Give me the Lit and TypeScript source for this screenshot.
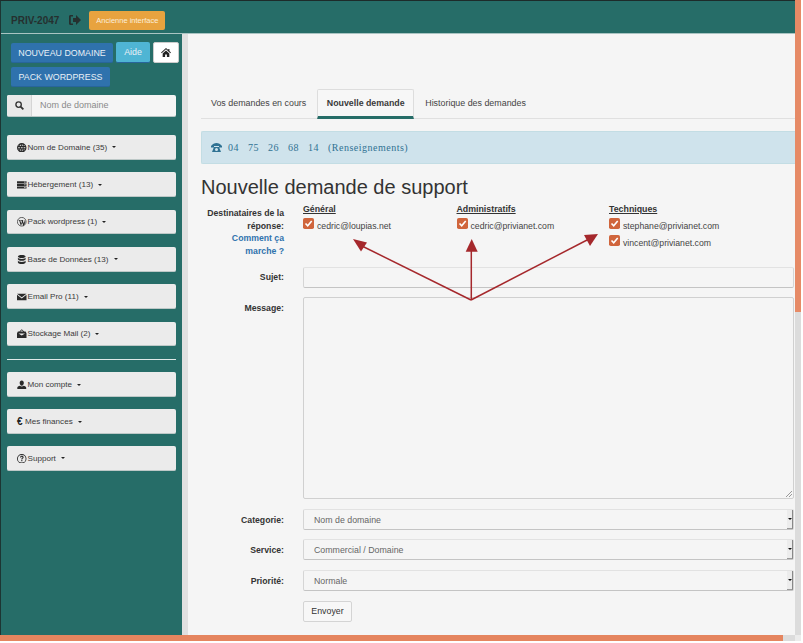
import { LitElement, html, css, svg } from "lit";
import { customElement } from "lit/decorators.js";

const icon = (body: unknown, w = 9.5, vb = "0 0 16 16") =>
  html`<svg class="ic" width=${w} height=${w} viewBox=${vb} fill="currentColor">${body}</svg>`;

const icons: Record<string, unknown> = {
  globe: icon(svg`<path fill-rule="evenodd" d="M8 0a8 8 0 1 0 0 16A8 8 0 0 0 8 0zM7 2v3H5c.3-1.400 1-2.500 2-3zm2 0c1 .5 1.700 1.600 2 3H9zM3.500 3.500 4 5H2.500zm9 0L13.500 5H12zM2 7h2.800v2H2zm4.500 0h3v2h-3zm4.700 0H14v2h-2.800zM2.500 11H4l-.5 1.500zM5 11h2v3c-1-.5-1.700-1.600-2-3zm4 0h2c-.3 1.400-1 2.500-2 3zm3 0h1.500l-1 1.500z"/>`),
  server: icon(svg`<path fill-rule="evenodd" d="M0 2h16v3.500H0zm0 4.500h16V10H0zM0 11h16v3.500H0zM12 3v1.300h2.500V3zm0 4.700V9h2.500V7.700zm0 4.500v1.300h2.500v-1.300z"/>`),
  wp: icon(svg`<circle cx="8" cy="8" r="7.300" fill="none" stroke="currentColor" stroke-width="1.200"/><path d="M2.800 5h3.600v.7l-1 .2 1.800 5.200 1-2.900-.7-2.300-.8-.2V5h3.900v.7l-.9.2 1.800 5.200 1-3.100c.3-1 .1-1.700-.3-2.300H13.600c.6 1.200.6 2.400.2 3.600l-2.300 5.700h-.7L8.700 9.600 7 14.500h-.7L3.700 5.900l-.9-.2z"/>`),
  db: icon(svg`<path d="M8 0C4 0 1.500 1 1.500 2.500S4 5 8 5s6.500-1 6.500-2.500S12 0 8 0zM1.500 4.300v3C1.500 8.800 4 9.800 8 9.800s6.500-1 6.500-2.500v-3C14.500 5.800 12 6.600 8 6.600s-6.500-.8-6.500-2.300zm0 5v3.200C1.500 14 4 15 8 15s6.500-1 6.500-2.500V9.300c0 1.500-2.500 2.300-6.500 2.300s-6.500-.8-6.500-2.300z"/>`),
  mail: icon(svg`<path d="M0 3h16L8 9zm0 1.800V14h16V4.800L8 11z"/>`),
  box: icon(svg`<path fill-rule="evenodd" d="M8 .5 12 4h2.500l1.500 3v8H0V7l1.500-3H4zM5.500 4h5L8 2zM2.500 7.500 8 11l5.500-3.500z"/>`),
  user: icon(svg`<path d="M8 1c2.200 0 3.500 1.600 3.500 4S10 9.500 8 9.500 4.500 7.400 4.500 5 5.800 1 8 1zM5 9.500c.8.800 1.800 1.300 3 1.300s2.200-.5 3-1.300c2.500.6 4.500 1.700 4.500 3.500v2H.5v-2c0-1.800 2-2.900 4.500-3.500z"/>`),
  help: icon(svg`<path fill-rule="evenodd" d="M8 0a8 8 0 1 0 0 16A8 8 0 0 0 8 0zm0 1.500a6.500 6.500 0 1 1 0 13 6.500 6.500 0 0 1 0-13zM5 6c0-2 1.500-3 3.200-3C10 3 11.200 4 11.200 5.500c0 2-2.200 2-2.200 3.700H7.200c0-2.500 2.100-2.500 2.100-3.700 0-.5-.4-.9-1.100-.9-.8 0-1.300.5-1.300 1.400zm2.200 4.200H9V12H7.200z"/>`),
};

const check = html`<svg class="cb" width="11" height="11" viewBox="0 0 11 11"><rect width="11" height="11" rx="1.800" fill="#d0653c"/><path d="M2.500 5.500 4.700 7.800 8.700 3" fill="none" stroke="#fff" stroke-width="1.600"/></svg>`;

const menu1: [string, string][] = [
  ["globe", "Nom de Domaine (35)"],
  ["server", "Hébergement (13)"],
  ["wp", "Pack wordpress (1)"],
  ["db", "Base de Données (13)"],
  ["mail", "Email Pro (11)"],
  ["box", "Stockage Mail (2)"],
];
const menu2: [string, string][] = [
  ["user", "Mon compte"],
  ["euro", "Mes finances"],
  ["help", "Support"],
];

@customElement("app-root")
export class AppRoot extends LitElement {
  static styles = css`
    :host {
      display: grid;
      grid-template-columns: 795px 6px 2px;
      grid-template-rows: 635px 6px 2px;
      width: 803px;
      height: 643px;
      overflow: hidden;
      font-family: "Liberation Sans", Arial, sans-serif;
      font-size: 10px;
      color: #333;
      background: #fff;
    }
    * { box-sizing: border-box; }
    .ic { display: block; flex: none; }
    .page { grid-column: 1; grid-row: 1; display: flex; flex-direction: column; min-width: 0; background: #266d68; border-top: 1px solid #1d2b2a; border-left: 1px solid #1d3533; }
    .top { height: 33px; flex: none; display: flex; align-items: center; padding: 6px 0 0 10px; border-bottom: 1px solid #a9c4c2; }
    .brand { font-size: 10px; font-weight: bold; color: #25302f; }
    .logout { margin-left: 10px; color: #25302f; }
    .old { margin-left: 8px; height: 19px; width: 76px; border-radius: 2px; background: #e8a33f; color: #fbeeda; font-size: 7.500px; display: flex; align-items: center; justify-content: center; }
    .body { flex: 1; display: flex; min-height: 0; }
    .side { width: 181px; flex: none; padding: 8px 0 0 6px; display: flex; flex-direction: column; }
    .acts { display: flex; flex-wrap: wrap; gap: 4px 3px; padding-left: 4px; align-items: flex-start; width: 173px; }
    .b { height: 20px; border-radius: 2px; display: flex; align-items: center; justify-content: center; color: #e9f0f6; font-size: 8.850px; background: #2f72ad; border-bottom: 1px solid #28659b; }
    .b.new { width: 102px; margin-top: 1px; }
    .b.help { width: 34px; height: 21px; background: #4fb5d4; }
    .b.home { width: 26px; height: 21px; background: #fff; color: #222; border: 1px solid #ccc; }
    .b.pack { width: 99px; }
    .search { margin-top: 8px; width: 169px; height: 22px; display: flex; border-radius: 2px; background: #f5f5f5; border-bottom: 1px solid #b9c6c5; }
    .search .ad { width: 25px; background: #e9e9e9; border-right: 1px solid #d5d5d5; display: flex; align-items: center; justify-content: center; color: #333; border-radius: 2px 0 0 2px; }
    .search .ph { padding-left: 8px; color: #8a8a8a; font-size: 9px; line-height: 21px; }
    .menu { display: flex; flex-direction: column; gap: 12.670px; width: 169px; }
    .menu.m1 { margin-top: 18px; }
    .menu.m2 { gap: 12.300px; }
    .item { height: 24.670px; background: #ebebeb; border-radius: 2px; border-bottom: 1px solid #bdc8c7; display: flex; align-items: center; padding: 1px 0 0 10px; font-size: 8.100px; color: #3a3a3a; gap: 1px; }
    .item .ic { color: #2a2a2a; }
    .euro { font-weight: bold; color: #222; font-size: 10px; width: 7px; }
    .caret { width: 0; height: 0; border-left: 2.500px solid transparent; border-right: 2.500px solid transparent; border-top: 2.500px solid #222; margin-left: 4px; }
    .sep { height: 1px; background: #dfe9e8; width: 169px; margin: 12.500px 0; }
    .strip { width: 6px; background: #e0e0e0; flex: none; }
    .content { flex: 1; min-width: 0; background: #f5f5f5; padding: 55px 0 0 13px; }
    .tabs { display: flex; height: 30px; border-bottom: 1px solid #e0e0e0; color: #444; font-size: 8.900px; align-items: stretch; }
    .tab { display: flex; align-items: center; padding: 0 10px 2px; }
    .tab.on { margin: 0 1px; font-weight: bold; font-size: 8.800px; color: #3a3a3a; border: 1px solid #ddd; border-bottom: 3px solid #266d68; border-radius: 2px 2px 0 0; background: #f7f7f7; height: 30px; width: 97px; justify-content: center; padding: 0; }
    .alert { margin-top: 12px; height: 33px; background: #cfe3ec; border: 1px solid #c3dde4; border-right: none; border-radius: 2px 0 0 2px; display: flex; align-items: center; padding-left: 9px; color: #2f7293; font-family: "Liberation Serif", serif; font-size: 10px; letter-spacing: .5px; word-spacing: 6px; gap: 6px; }
    h1 { margin: 12px 0 0; font-size: 20px; font-weight: normal; line-height: 23px; color: #333; }
    .form { margin-top: 8px; display: grid; grid-template-columns: 83px 491px; column-gap: 19px; align-items: start; position: relative; }
    .lab { text-align: right; font-weight: bold; font-size: 8.700px; color: #333; line-height: 12.700px; }
    .lab a { color: #2f72ad; display: block; }
    .lab.mid { line-height: 21px; }
    .lab.low { height: 21px; padding-top: 1px; }
    .dest { height: 45px; margin-top: -4px; display: grid; grid-template-columns: 153.500px 152.500px 1fr; }
    .dest h4 { margin: 0 0 4px; font-size: 8.800px; font-weight: bold; line-height: 12px; text-decoration: underline; color: #333; }
    .cbrow { display: flex; gap: 3px; height: 17px; align-items: flex-start; font-size: 8.700px; color: #444; line-height: 14px; }
    .cb { flex: none; margin-top: -1px; }
    .mt9 { margin-top: 9px; }
    .mt10 { margin-top: 10px; }
    .mt95 { margin-top: 9.500px; }
    .field { height: 21px; border: 1px solid #d5d5d5; border-top-color: #e2e2e2; border-bottom-color: #c4c4c4; border-radius: 2px; background: #f5f5f5; display: flex; align-items: center; padding-left: 10px; color: #666; font-size: 8.800px; }
    .sel { justify-content: space-between; padding-right: 0; }
    .sel .val { padding-top: 1px; }
    .spin { width: 6px; height: 19px; background: #ececec; border-right: 1px solid #888; border-bottom: 1px solid #999; display: flex; align-items: center; justify-content: center; }
    .spin i { width: 0; height: 0; border-left: 2px solid transparent; border-right: 2px solid transparent; border-top: 2.500px solid #111; }
    .ta { height: 202px; margin-top: 9px; border: 1px solid #d0d0d0; border-radius: 2px; position: relative; }
    .grip { position: absolute; right: 1px; bottom: 1px; }
    .send { margin-top: 10px; width: 49px; height: 21px; border: 1px solid #d4d4d4; border-radius: 2px; display: flex; align-items: center; justify-content: center; font-size: 8.800px; color: #333; background: #f7f7f7; }
    .arrows { position: absolute; left: 0; top: -1px; pointer-events: none; }
    .vbar { grid-column: 2; grid-row: 1; display: flex; flex-direction: column; background: #dcdcdc; }
    .thumb { height: 312px; background: #e68a66; }
    .hbar { grid-column: 1; grid-row: 2; display: flex; background: #dcdcdc; }
    .hthumb { width: 783px; background: #e5855f; }
    .corner { grid-column: 2; grid-row: 2; background: #ececec; }
  `;

  private item([k, t]: [string, string]) {
    return html`<div class="item">${k === "euro" ? html`<span class="euro">€</span>` : icons[k]}<span>${t}</span><span class="caret"></span></div>`;
  }

  private field(t: string) {
    return html`<div class="field sel"><span class="val">${t}</span><span class="spin"><i></i></span></div>`;
  }

  render() {
    return html`
      <div class="page">
        <div class="top">
          <span class="brand">PRIV-2047</span>
          <span class="logout"><svg class="ic" width="12" height="10" viewBox="0 0 12 10" fill="currentColor"><path d="M7 0l5 5-5 5V7H4V3h3zM0 1.500C0 .7.700 0 1.500 0H4v1.500H1.800v7H4V10H1.500C.7 10 0 9.300 0 8.500z"/></svg></span>
          <span class="old">Ancienne interface</span>
        </div>
        <div class="body">
          <aside class="side">
            <div class="acts">
              <div class="b new">NOUVEAU DOMAINE</div>
              <div class="b help">Aide</div>
              <div class="b home"><svg class="ic" width="10" height="9" viewBox="0 0 11 10" fill="currentColor"><path d="M5.500 0 8 2.200V1h1.300v2.400L11 5l-.7.700-4.800-4.200L.7 5.700 0 5zM1.800 6l3.700-3.200L9.200 6v4H6.500V7.200h-2V10H1.800z"/></svg></div>
              <div class="b pack">PACK WORDPRESS</div>
            </div>
            <div class="search">
              <span class="ad"><svg class="ic" width="9" height="9" viewBox="0 0 10 10" fill="none" stroke="currentColor" stroke-width="1.500"><circle cx="4" cy="4" r="3"/><path d="M6.200 6.200 9.300 9.300" stroke-width="2"/></svg></span>
              <span class="ph">Nom de domaine</span>
            </div>
            <div class="menu m1">${menu1.map((m) => this.item(m))}</div>
            <div class="sep"></div>
            <div class="menu m2">${menu2.map((m) => this.item(m))}</div>
          </aside>
          <div class="strip"></div>
          <main class="content">
            <div class="tabs">
              <div class="tab">Vos demandes en cours</div>
              <div class="tab on">Nouvelle demande</div>
              <div class="tab">Historique des demandes</div>
            </div>
            <div class="alert">
              <svg class="ic" width="11" height="9" viewBox="0 0 11 9" fill="currentColor"><path d="M0 3C1.500 1 3.500 0 5.500 0S9.500 1 11 3v1.500H8V3H3v1.500H0zM3 4h5l2 5H1zM5.500 5a1.500 1.500 0 1 0 0 3 1.500 1.500 0 0 0 0-3z"/></svg>
              <span>04 75 26 68 14 (Renseignements)</span>
            </div>
            <h1>Nouvelle demande de support</h1>
            <div class="form">
              <div class="lab">Destinataires de la réponse:<a>Comment ça marche ?</a></div>
              <div class="dest">
                <div><h4>Général</h4><div class="cbrow">${check}<span>cedric@loupias.net</span></div></div>
                <div><h4>Administratifs</h4><div class="cbrow">${check}<span>cedric@privianet.com</span></div></div>
                <div><h4>Techniques</h4><div class="cbrow">${check}<span>stephane@privianet.com</span></div><div class="cbrow">${check}<span>vincent@privianet.com</span></div></div>
              </div>
              <div class="lab mid mt9">Sujet:</div>
              <div class="field mt9"></div>
              <div class="lab mid mt10">Message:</div>
              <div class="ta"><svg class="grip" width="7" height="7" viewBox="0 0 7 7" stroke="#999" fill="none"><path d="M1 7 7 1M4 7 7 4"/></svg></div>
              <div class="lab mid low mt10">Categorie:</div>
              <div class="mt10">${this.field("Nom de domaine")}</div>
              <div class="lab mid low mt95">Service:</div>
              <div class="mt95">${this.field("Commercial / Domaine")}</div>
              <div class="lab mid low mt95">Priorité:</div>
              <div class="mt95">${this.field("Normale")}</div>
              <div></div>
              <div class="send">Envoyer</div>
              <svg class="arrows" width="594" height="120" viewBox="0 0 594 120" fill="#a5282c" stroke="none">
                <path d="M270 94 161 40" stroke="#a5282c" stroke-width="1.500"/>
                <path d="M270.300 94V44" stroke="#a5282c" stroke-width="1.500"/>
                <path d="M270 94 388 33" stroke="#a5282c" stroke-width="1.500"/>
                <path d="M152 33l14 3.500-6 9z"/>
                <path d="M270.700 33l6 12.700h-12z"/>
                <path d="M397 28l-14 1 6 11z"/>
              </svg>
            </div>
          </main>
        </div>
      </div>
      <div class="vbar"><div class="thumb"></div></div>
      <div class="hbar"><div class="hthumb"></div></div>
      <div class="corner"></div>
    `;
  }
}
